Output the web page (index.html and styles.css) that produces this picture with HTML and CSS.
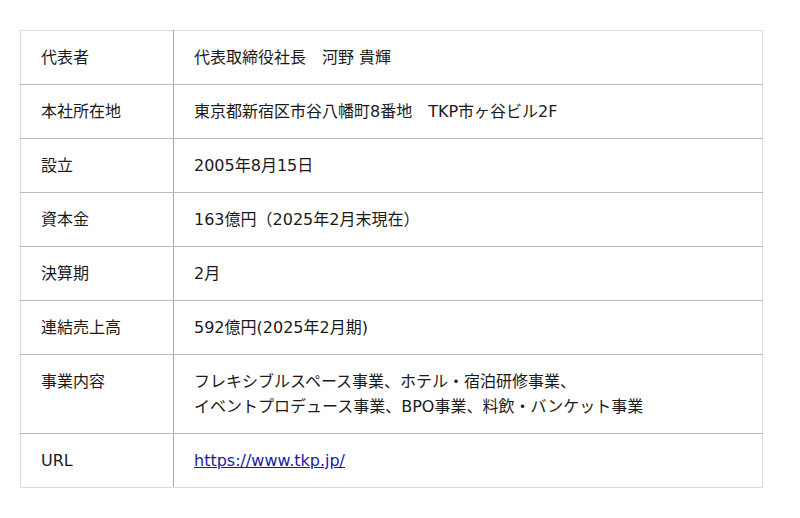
FILE: index.html
```html
<!DOCTYPE html>
<html lang="ja">
<head>
<meta charset="utf-8">
<link rel="stylesheet" href="styles.css">
</head>
<body>
<div class="wrap">
<table class="info">
  <tr><th>代表者</th><td>代表取締役社長　河野 貴輝</td></tr>
  <tr><th>本社所在地</th><td>東京都新宿区市谷八幡町8番地　TKP市ヶ谷ビル2F</td></tr>
  <tr><th>設立</th><td>2005年8月15日</td></tr>
  <tr><th>資本金</th><td>163億円（2025年2月末現在）</td></tr>
  <tr><th>決算期</th><td>2月</td></tr>
  <tr><th>連結売上高</th><td>592億円(2025年2月期)</td></tr>
  <tr><th>事業内容</th><td>フレキシブルスペース事業、ホテル・宿泊研修事業、<br>イベントプロデュース事業、BPO事業、料飲・バンケット事業</td></tr>
  <tr><th>URL</th><td><a href="#">https://www.tkp.jp/</a></td></tr>
</table>
</div>
</body>
</html>
```
FILE: styles.css
```css
html, body {
  margin: 0;
  padding: 0;
  background: #fff;
}
.wrap {
  padding: 30px 38px 0 20px;
}
.info {
  width: 743px;
  border-collapse: collapse;
  border: 1px solid #ddd;
  font-family: "DejaVu Sans", "Noto Sans CJK JP", sans-serif;
  font-size: 16px;
  line-height: 25px;
  color: #1a1a1a;
}
.info th,
.info td {
  text-align: left;
  vertical-align: top;
  font-weight: normal;
  padding: 14px 20px;
  border-top: 1px solid #bbb;
  border-bottom: 1px solid #bbb;
}
.info th {
  width: 112px;
  border-right: 1px solid #aaa;
}
.info tr:first-child th,
.info tr:first-child td {
  border-top: 1px solid #ddd;
}
.info tr:last-child th,
.info tr:last-child td {
  border-bottom: 1px solid #ddd;
}
.info a {
  color: #1a1aa0;
  text-decoration: underline;
}
```
